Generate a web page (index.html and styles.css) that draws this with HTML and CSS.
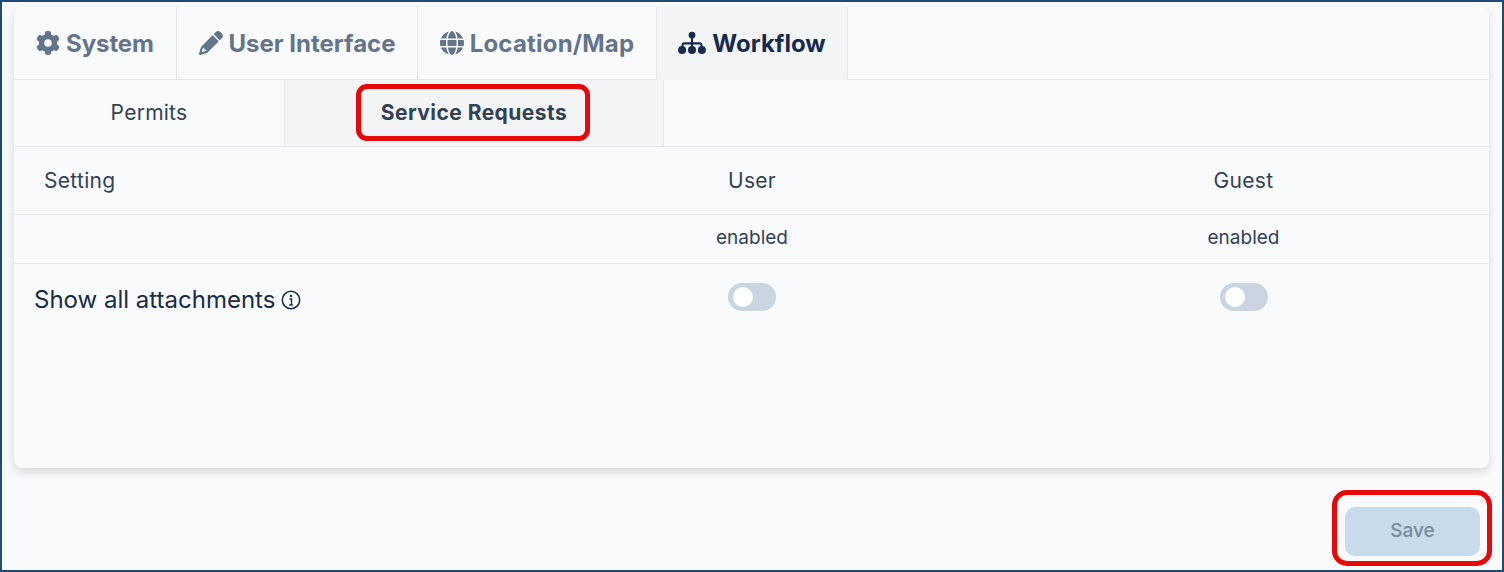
FILE: index.html
```html
<!DOCTYPE html>
<html lang="en">
<head>
<meta charset="utf-8">
<title>Workflow settings</title>
<link rel="stylesheet" href="styles.css">
</head>
<body>
<div class="frame">
  <main class="card">
    <nav class="tabs">
      <div class="tab tab-system">
        <svg class="tab-icon" viewBox="0 0 512 512"><path d="M495.900 166.600c3.200 8.700.5 18.400-6.400 24.600l-43.300 39.400c1.100 8.300 1.700 16.800 1.700 25.400s-.6 17.100-1.700 25.400l43.300 39.400c6.900 6.200 9.600 15.900 6.400 24.600-4.400 11.900-9.700 23.300-15.800 34.300l-4.700 8.100c-6.600 11-14 21.400-22.100 31.200-5.900 7.200-15.700 9.600-24.500 6.800l-55.700-17.700c-13.400 10.300-28.200 18.900-44 25.400l-12.500 57.100c-2 9.100-9 16.300-18.200 17.800-13.800 2.300-28 3.500-42.500 3.500s-28.700-1.200-42.500-3.500c-9.200-1.500-16.200-8.700-18.200-17.800l-12.500-57.100c-15.800-6.500-30.600-15.100-44-25.400l-55.600 17.800c-8.800 2.800-18.600.3-24.500-6.800-8.100-9.800-15.500-20.200-22.100-31.200l-4.700-8.100c-6.100-11-11.400-22.400-15.800-34.300-3.200-8.700-.5-18.400 6.400-24.600l43.300-39.400c-1.100-8.400-1.700-16.900-1.700-25.500s.6-17.100 1.700-25.400l-43.300-39.400c-6.900-6.200-9.600-15.900-6.400-24.600 4.400-11.900 9.700-23.300 15.800-34.300l4.700-8.100c6.600-11 14-21.400 22.100-31.200 5.900-7.200 15.700-9.600 24.500-6.800l55.700 17.700c13.400-10.300 28.200-18.900 44-25.400l12.500-57.100c2-9.100 9-16.300 18.200-17.800C227.300 1.200 241.500 0 256 0s28.700 1.200 42.500 3.500c9.200 1.500 16.200 8.700 18.200 17.800l12.500 57.100c15.800 6.500 30.600 15.100 44 25.400l55.700-17.700c8.800-2.800 18.600-.3 24.500 6.800 8.100 9.800 15.500 20.200 22.100 31.200l4.700 8.100c6.100 11 11.400 22.400 15.800 34.300zM256 336a80 80 0 1 0 0-160 80 80 0 1 0 0 160z"/></svg>
        <span>System</span>
      </div>
      <div class="tab tab-ui">
        <svg class="tab-icon" viewBox="0 0 512 512"><path d="M410.300 231l11.300-11.300-33.900-33.900-62.100-62.100-33.900-33.900-11.300 11.300-22.600 22.600L58.600 322.900c-10.400 10.400-18 23.300-22.200 37.400L1 480.700c-2.500 8.400-.2 17.500 6.100 23.700s15.300 8.500 23.700 6.100l120.300-35.400c14.100-4.200 27-11.800 37.400-22.200L387.700 253.700 410.300 231zM160 399.400l-9.100 22.700c-4 3.100-8.500 5.400-13.300 6.900L59.400 452l23-78.100c1.400-4.900 3.800-9.400 6.900-13.300l22.700-9.100v32c0 8.800 7.200 16 16 16h32zM362.700 18.700L348.300 33.200 325.700 55.800 314.300 67.100l33.900 33.900 62.100 62.100 33.900 33.900 11.300-11.300 22.600-22.600 14.500-14.500c25-25 25-65.500 0-90.500L453.300 18.700c-25-25-65.500-25-90.500 0z"/></svg>
        <span>User Interface</span>
      </div>
      <div class="tab tab-map">
        <svg class="tab-icon" viewBox="0 0 512 512"><path d="M352 256c0 22.200-1.200 43.600-3.300 64H163.300c-2.200-20.400-3.300-41.800-3.300-64s1.200-43.600 3.300-64h185.400c2.200 20.400 3.300 41.800 3.300 64zm28.800-64h123.100c5.300 20.500 8.100 41.900 8.100 64s-2.800 43.500-8.100 64H380.800c2.100-20.600 3.200-42 3.200-64s-1.100-43.400-3.200-64zm112.600-32H376.700c-10-63.900-29.800-117.400-55.300-151.600 78.300 20.700 142 77.500 171.900 151.600zm-149.100 0H167.700c6.100-36.400 15.500-68.600 27-94.700 10.500-23.600 22.200-40.700 33.500-51.500C239.400 3.200 248.700 0 256 0s16.600 3.200 27.800 13.800c11.300 10.800 23 27.900 33.500 51.500 11.600 26 20.900 58.200 27 94.700zm-209 0H18.600C48.600 85.900 112.200 29.100 190.600 8.400 165.100 42.600 145.300 96.100 135.300 160zM8.100 192h123.100c-2.100 20.600-3.200 42-3.200 64s1.100 43.400 3.200 64H8.100C2.800 299.500 0 278.100 0 256s2.800-43.500 8.100-64zm186.600 254.600c-11.600-26-20.900-58.200-27-94.600h176.600c-6.100 36.400-15.500 68.600-27 94.600-10.500 23.600-22.200 40.700-33.500 51.500-11.200 10.700-20.500 13.900-27.800 13.900s-16.600-3.200-27.800-13.800c-11.300-10.800-23-27.900-33.500-51.500zM135.300 352c10 63.900 29.800 117.400 55.300 151.600-78.400-20.700-142-77.500-172-151.600h116.700zm358.100 0c-30 74.100-93.600 130.900-171.900 151.600 25.500-34.200 45.200-87.700 55.300-151.600h116.600z"/></svg>
        <span>Location/Map</span>
      </div>
      <div class="tab tab-flow">
        <svg class="tab-icon tab-icon-wide" viewBox="0 0 640 512"><circle cx="320" cy="76" r="76"/><rect x="296" y="120" width="48" height="230"/><path d="M80 350v-50c0-35 25-60 60-60h360c35 0 60 25 60 60v50h-48v-50c0-8-5-12-12-12H140c-7 0-12 4-12 12v50z"/><circle cx="94" cy="416" r="92"/><circle cx="320" cy="416" r="92"/><circle cx="546" cy="416" r="92"/></svg>
        <span>Workflow</span>
      </div>
    </nav>
    <div class="subtabs">
      <div class="subtab subtab-first">Permits</div>
      <div class="subtab subtab-active">Service Requests</div>
    </div>
    <div class="grid grid-head">
      <div class="head-setting">Setting</div>
      <div class="cell">User</div>
      <div class="cell">Guest</div>
    </div>
    <div class="grid grid-sub">
      <div></div>
      <div class="cell">enabled</div>
      <div class="cell">enabled</div>
    </div>
    <div class="grid grid-row">
      <div class="row-label">
        <span>Show all attachments</span>
        <svg class="info" viewBox="0 0 20 20"><circle cx="10" cy="10" r="8.700" fill="none" stroke="currentColor" stroke-width="1.500"/><circle cx="10" cy="6" r="1.200" fill="currentColor"/><path d="M8.500 9h2v6M8.200 15h3.600" fill="none" stroke="currentColor" stroke-width="1.300"/></svg>
      </div>
      <div class="cell"><span class="toggle"><span class="knob"></span></span></div>
      <div class="cell"><span class="toggle"><span class="knob"></span></span></div>
    </div>
  </main>
  <footer class="actions">
    <button class="save" type="button">Save</button>
  </footer>
  <div class="mark mark-service"></div>
  <div class="mark mark-save"></div>
</div>
</body>
</html>
```
FILE: styles.css
```css
* { box-sizing: border-box; }
html, body { margin: 0; height: 100%; }
body {
  font-family: "Inter", "Liberation Sans", sans-serif;
  background: #f9fafc;
  color: #1e293b;
}
.frame {
  position: relative;
  width: 1504px;
  height: 572px;
  border: 2px solid #1f4a75;
  padding: 5px 12px 0;
  overflow: hidden;
}
.card {
  height: 461px;
  width: 1475px;
  background: #f9fafc;
  border-radius: 8px;
  box-shadow: 0 4px 10px rgba(0, 0, 0, 0.14);
}
.tabs {
  display: flex;
  height: 73px;
  border-bottom: 1px solid #e5e7eb;
}
.tab {
  display: flex;
  align-items: center;
  justify-content: center;
  gap: 6px;
  height: 72px;
  font-size: 24px;
  font-weight: 700;
  color: #64748b;
  border-right: 1px solid #e5e7eb;
}
.tab-system { width: 163px; letter-spacing: -0.1px; }
.tab-ui { width: 241px; letter-spacing: 0; }
.tab-map { width: 238px; letter-spacing: 0.2px; border-right: 0; }
.tab-flow {
  width: 192px;
  height: 73px;
  color: #172b4d;
  background: #f3f4f6;
  border-left: 1px solid #e5e7eb;
  border-bottom: 1px solid #f3f4f6;
}
.tab-icon { width: 24px; height: 24px; fill: currentColor; flex: none; }
.tab-icon-wide { width: 28px; }
.subtabs {
  display: flex;
  height: 67px;
  border-bottom: 1px solid #e5e7eb;
}
.subtab {
  display: flex;
  align-items: center;
  justify-content: center;
  padding-bottom: 1px;
  font-size: 21px;
  color: #334155;
  border-right: 1px solid #e5e7eb;
}
.subtab-first { width: 271px; font-weight: 400; letter-spacing: 0.25px; }
.subtab-active { width: 379px; background: #f3f4f6; font-weight: 700; letter-spacing: 0.45px; }
.grid {
  display: grid;
  grid-template-columns: 492px 492px 1fr;
  align-items: center;
  border-bottom: 1px solid #e5e7eb;
}
.grid-head { height: 68px; font-size: 21px; letter-spacing: 0.3px; color: #334155; }
.head-setting { padding-left: 30px; }
.cell { text-align: center; }
.grid-sub { height: 49px; padding-bottom: 3px; font-size: 19px; color: #334155; }
.grid-row { height: 74px; border-bottom: 0; align-items: start; }
.row-label {
  display: flex;
  align-items: center;
  gap: 6px;
  padding: 21px 0 0 20px;
  font-size: 24px;
  color: #1a2b45;
}
.info { width: 20px; height: 20px; }
.grid-row .cell { padding-top: 19px; line-height: 0; }
.toggle {
  display: inline-block;
  width: 48px;
  height: 28px;
  padding: 4px 5px;
  border-radius: 14px;
  background: #cbd5e1;
}
.knob {
  display: block;
  width: 20px;
  height: 20px;
  border-radius: 50%;
  background: #fff;
}
.actions {
  display: flex;
  justify-content: flex-end;
  padding: 39px 10px 0 0;
}
.save {
  width: 135px;
  height: 49px;
  padding: 0 0 3px;
  border: 0;
  border-radius: 10px;
  background: #c7dbea;
  color: #7a8a9a;
  font: 500 19px "Inter", "Liberation Sans", sans-serif;
}
.mark {
  position: absolute;
  border: 5px solid #e80808;
  border-radius: 11px;
}
.mark-service { left: 354px; top: 82px; width: 234px; height: 57px; }
.mark-save { left: 1330px; top: 488px; width: 160px; height: 76px; border-radius: 15px; }
```
